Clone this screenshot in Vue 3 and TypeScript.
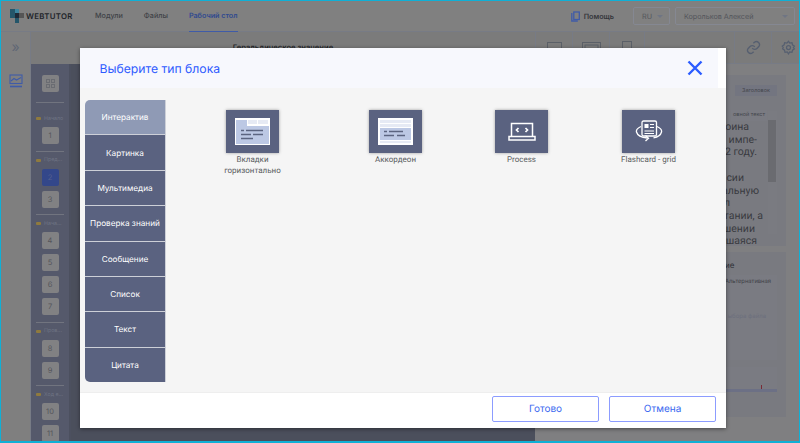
<script setup lang="ts">
interface Tile { name: string; kind: string }
const tabs: string[] = ['Интерактив', 'Картинка', 'Мультимедиа', 'Проверка знаний', 'Сообщение', 'Список', 'Текст', 'Цитата']
const tiles: Tile[] = [
  { name: 'Вкладки горизонтально', kind: 'tabs' },
  { name: 'Аккордеон', kind: 'acc' },
  { name: 'Process', kind: 'proc' },
  { name: 'Flashcard - grid', kind: 'flash' },
]
const groups = [
  { label: 'Начало', items: [1] },
  { label: 'Пред...', items: [2, 3] },
  { label: 'Нача...', items: [4, 5, 6, 7] },
  { label: 'Пров...', items: [8, 9] },
  { label: 'Ход е...', items: [10, 11] },
]
const lines = [
  { t: 'роина', pr: 14 },
  { t: '. импе-', pr: 6 },
  { t: '2 году.', pr: 6 },
  { t: '\u00a0', pr: 0 },
  { t: 'сии', pr: 19 },
  { t: 'альную', pr: 4 },
  { t: 'л', pr: 33 },
  { t: 'тании, а', pr: 0 },
  { t: 'шении', pr: 8 },
  { t: '-шаяся', pr: 6 },
]
</script>

<template>
  <div class="page">
    <header class="top">
      <div class="logo">
        <svg width="14" height="14" viewBox="0 0 14 14"><rect x="0" y="0" width="5" height="9" fill="#24566a"/><rect x="5" y="0" width="4" height="4" fill="#3c86a0"/><rect x="5" y="4" width="4" height="5" fill="#1d2a38"/><rect x="9" y="4" width="5" height="5" fill="#555"/><rect x="5" y="9" width="4" height="5" fill="#24566a"/></svg>
        <span>WEBTUTOR</span>
      </div>
      <nav class="nav">
        <span>Модули</span><span>Файлы</span><span class="active">Рабочий стол</span>
      </nav>
      <div class="top-right">
        <svg class="book" width="9" height="11" viewBox="0 0 9 11" fill="none" stroke="#3f5ba8" stroke-width="1.3"><rect x="2.800" y="1" width="5.500" height="7.500"/><path d="M.8 2v8h6"/></svg>
        <span class="help">Помощь</span>
        <div class="sel sel-lang">RU<i></i></div>
        <div class="sel sel-user">Корольков Алексей<i></i></div>
      </div>
    </header>
    <div class="main">
      <aside class="rail">
        <div class="chev">»</div>
        <svg width="14" height="14" viewBox="0 0 14 14" fill="none" stroke="#3f5ba8" stroke-width="1.1"><rect x="1" y="1" width="12" height="8.500"/><path d="M2 7l3-2.500 2.500 1.500L12 3.500"/><path d="M1 12.500h12" stroke-width="1.600"/></svg>
      </aside>
      <div class="work">
        <div class="toolbar">
          <div class="doc-title">Геральдическое значение</div>
          <div class="tools">
            <div class="tool w37"><svg width="15" height="12" viewBox="0 0 15 12" fill="none" stroke="#5b6068"><rect x=".5" y=".5" width="14" height="11"/></svg></div>
            <div class="tool w37"><svg width="19" height="12" viewBox="0 0 19 12" fill="none" stroke="#5b6068"><rect x=".5" y=".5" width="18" height="11"/><rect x="3" y="3" width="13" height="6"/></svg></div>
            <div class="tool w35"><svg width="10" height="13" viewBox="0 0 10 13" fill="none" stroke="#5b6068"><rect x=".5" y=".5" width="9" height="12"/></svg></div>
            <div class="tool grow"></div>
            <div class="tool w37"><svg width="15" height="15" viewBox="0 0 24 24" fill="none" stroke="#565f70" stroke-width="2.200"><path d="M10 13a5 5 0 0 0 7.500.5l3-3a5 5 0 0 0-7-7l-1.700 1.700"/><path d="M14 11a5 5 0 0 0-7.500-.5l-3 3a5 5 0 0 0 7 7l1.700-1.700"/></svg></div>
            <div class="tool w30"><svg width="15" height="15" viewBox="0 0 24 24" fill="none" stroke="#565f70" stroke-width="2"><circle cx="12" cy="12" r="3.200"/><path d="M12 2l2 3 3.600-.8.8 3.600 3 2-1.600 2.200 1.600 2.200-3 2-.8 3.600-3.600-.8-2 3-2-3-3.600.8-.8-3.600-3-2L3.600 12 2 9.800l3-2 .8-3.600 3.600.8z"/></svg></div>
          </div>
        </div>
        <div class="content">
          <div class="slides">
            <div class="grid-btn"><span class="mini"><u></u><u></u><u></u><u></u></span></div>
            <template v-for="(g, gi) in groups" :key="g.label">
              <div class="rule" :class="{ first: gi === 0 }"></div>
              <div class="folder"><b></b>{{ g.label }}</div>
              <div v-for="n in g.items" :key="n" class="thumb" :class="{ cur: n === 2 }">{{ n }}</div>
            </template>
          </div>
          <div class="stage"></div>
          <div class="props">
            <div class="card c1">
              <div class="hdr"><span>Заголовок</span></div>
              <div class="alt-tag">овной текст</div>
              <div class="txt">
                <div v-for="(l, i) in lines" :key="i" :style="{ paddingRight: l.pr + 'px' }">{{ l.t }}</div>
              </div>
              <div class="scroll"><em></em></div>
            </div>
            <div class="card c2">
              <div class="c2t">ие</div>
              <div class="box">
                <div class="alt">Альтернативная</div>
                <div class="file">ыбора файла</div>
              </div>
              <div class="box2"><s></s></div>
            </div>
          </div>
        </div>
      </div>
    </div>

    <section class="modal">
      <div class="m-head">
        <h2>Выберите тип блока</h2>
        <svg class="close" width="16" height="16" viewBox="0 0 16 16"><path d="M1.500 1.500l13 13M14.500 1.500l-13 13" stroke="#2b5cff" stroke-width="2.400" fill="none"/></svg>
      </div>
      <div class="m-body">
        <div class="tabs">
          <div v-for="(t, i) in tabs" :key="t" class="tab" :class="{ on: i === 0 }">{{ t }}</div>
        </div>
        <div class="tiles">
          <div v-for="t in tiles" :key="t.kind" class="tile" :class="t.kind">
            <div class="ico">
              <svg v-if="t.kind === 'tabs'" width="35" height="27" viewBox="0 0 35 27">
                <rect width="35" height="27" fill="#fff"/><rect x="1" y="2" width="11" height="8" fill="#bcc8e4"/><rect x="13" y="2" width="9" height="4" fill="#e6eaf4"/><rect x="23" y="2" width="10" height="4" fill="#e6eaf4"/><rect x="1" y="8" width="33" height="18" fill="#bcc8e4"/>
                <path d="M6 12.500h3M11 12.500h17M6 16.500h10M18 16.500h10M6 20.500h12" stroke="#5b6480" stroke-width="1.400"/>
              </svg>
              <svg v-else-if="t.kind === 'acc'" width="35" height="27" viewBox="0 0 35 27">
                <rect width="35" height="27" fill="#fff"/><rect x="2" y="2" width="31" height="3" fill="#e6eaf4"/><rect x="2" y="6" width="31" height="3" fill="#e6eaf4"/><rect x="2" y="10" width="31" height="12" fill="#bcc8e4"/><rect x="2" y="23" width="31" height="2" fill="#e6eaf4"/>
                <path d="M6 13.500h3M11 13.500h14M6 17.500h10M19 17.500h8" stroke="#5b6480" stroke-width="1.400"/>
              </svg>
              <svg v-else-if="t.kind === 'proc'" width="28" height="20" viewBox="0 0 28 20" fill="none" stroke="#fff" stroke-width="1.500">
                <path d="M3.500 14V1.500h21V14"/><rect x="1" y="14.500" width="26" height="3.500"/>
                <path d="M10.500 6l-2 2 2 2M17.500 6l2 2-2 2" stroke-width="1.700"/>
              </svg>
              <svg v-else width="28" height="24" viewBox="0 0 28 24" fill="none" stroke="#fff" stroke-width="1.300">
                <rect x="7" y="1" width="14.500" height="15" rx="1.500"/><rect x="9.500" y="4" width="4" height="4" fill="#fff" stroke="none"/><path d="M15 4.500h4M15 7.500h4M9.500 11h9.500M9.500 13.500h9.500" stroke-width="1"/>
                <path d="M6 6.500C2.500 8 1 10 1.500 12c.8 3 5 5.500 11 6"/><path d="M22 6.500c3.500 1.500 5 3.500 4.500 5.500-.6 2.500-3.500 5-8 5.800"/><path d="M10.500 15.500l3 2.700-3 2.800"/>
              </svg>
            </div>
            <div class="lbl">{{ t.name }}</div>
          </div>
        </div>
      </div>
      <div class="m-foot">
        <button type="button">Готово</button>
        <button type="button">Отмена</button>
      </div>
    </section>
  </div>
</template>

<style>
html, body { margin: 0; padding: 0; background: #7f7f7f; }
</style>

<style scoped>
* { box-sizing: border-box; }
.page {
  position: relative; width: 800px; height: 443px; overflow: hidden;
  display: flex; flex-direction: column; background: #7f7f7f;
  border: solid #0fb0d6; border-width: 1px 1px 2px 1px;
  font-family: Inter, "Noto Sans", sans-serif; color: #2f3137;
  text-rendering: geometricPrecision;
}
.top { height: 31px; flex: none; display: flex; align-items: center; background: #808080; border-bottom: 1px solid #777b85; position: relative; }
.logo { display: flex; align-items: center; margin-left: 9px; width: 85px; gap: 2px; }
.logo span { font: 600 7.800px Inter, sans-serif; letter-spacing: .3px; color: #20242a; }
.nav { display: flex; height: 31px; align-items: center; font-size: 7.200px; font-weight: 500; color: #3f4247; }
.nav span { margin-right: 21px; line-height: 31px; height: 32px; }
.nav .active { color: #304a8f; font-weight: 600; border-bottom: 1px solid #3f5ba8; }
.top-right { margin-left: auto; display: flex; align-items: center; }
.book { margin-right: 4px; }
.help { font-size: 7.200px; font-weight: 600; color: #35373c; margin-right: 19px; }
.sel { height: 18px; border: 1px solid #858892; border-radius: 2px; font-size: 7.200px; color: #54565c; display: flex; align-items: center; padding-left: 8px; position: relative; }
.sel i { position: absolute; right: 6px; top: 7px; border: 3px solid transparent; border-top: 3px solid #6f7583; border-bottom-width: 0; }
.sel-lang { width: 37px; margin-right: 5px; }
.sel-user { width: 120px; margin-right: 4px; }
.main { flex: 1; display: flex; min-height: 0; }
.rail { width: 30px; background: #7f7f7f; border-right: 1px solid #777b85; display: flex; flex-direction: column; align-items: center; }
.chev { color: #5f6775; font-size: 14px; line-height: 14px; margin-top: 9px; height: 33px; }
.work { flex: 1; display: flex; flex-direction: column; min-width: 0; }
.toolbar { height: 32px; flex: none; display: flex; background: #7b7b7b; }
.doc-title { width: 504px; text-align: center; padding: 11px 0 0 0; font-size: 7.600px; font-weight: 600; color: #26282c; }
.tools { flex: 1; display: flex; border-bottom: 1px solid #777b85; }
.tool { border-left: 1px solid #777b85; display: flex; align-items: center; justify-content: center; }
.w37 { width: 37px; } .w35 { width: 35px; } .w30 { flex: 1; padding-left: 5px; } .grow { width: 90px; }
.content { flex: 1; display: flex; min-height: 0; }
.slides { width: 40px; background: #55596b; border-right: 2px solid #4c505f; display: flex; flex-direction: column; align-items: center; overflow: hidden; padding-top: 11px; }
.grid-btn { width: 17px; height: 17px; background: #818183; border-radius: 2px; display: flex; align-items: center; justify-content: center; flex: none; margin-bottom: 8px; }
.mini { width: 9px; height: 9px; display: grid; grid-template-columns: 4px 4px; gap: 1px; }
.mini u { border: 1px solid #6a6c72; display: block; }
.rule { width: 28px; height: 1px; background: #71747f; flex: none; margin-bottom: 3px; margin-top: 1.500px; }
.rule.first { margin-bottom: 10px; margin-top: 2px; }
.folder { width: 28px; height: 9px; font-size: 5.300px; color: #6f7484; white-space: nowrap; display: flex; align-items: center; gap: 3px; flex: none; margin-top: 1px; margin-bottom: 4px; }
.folder b { width: 5px; height: 3px; background: #8f7a3e; border-radius: 1px; flex: none; }
.thumb { width: 17px; height: 17px; background: #818183; border-radius: 2px; flex: none; margin-bottom: 5px; font-size: 7.500px; color: #55565b; display: flex; align-items: center; justify-content: center; }
.thumb.cur { background: #33478a; color: #55608e; }
.stage { width: 464px; background: #4b4f5c; }
.props { flex: 1; background: #7f7f81; padding: 11px 13px 0 0; display: flex; flex-direction: column; position: relative; min-width: 0; }
.card { background: #797a80; margin-left: 184px; }
.c1 { height: 171px; position: relative; overflow: hidden; }
.hdr { height: 20px; display: flex; justify-content: flex-end; padding: 10px 9px 0 0; }
.hdr span { font-size: 5.500px; background: #737580; color: #44464c; padding: 3px 7px; height: 11px; line-height: 6px; }
.alt-tag { position: absolute; right: 19px; top: 35px; height: 11px; line-height: 11px; padding: 0 2px; background: #7a7b82; font-size: 5.500px; color: #44464c; }
.txt { position: absolute; left: 0; right: 23px; top: 46px; font-size: 10.500px; line-height: 12.700px; text-align: right; color: #3a3b41; white-space: nowrap; font-family: Roboto, sans-serif; }
.scroll { position: absolute; right: 9px; top: 36px; width: 9px; height: 123px; background: #7a7b81; padding-top: 9px; }
.scroll em { display: block; width: 8px; height: 62px; background: #6a6b70; }
.c2 { height: 165px; margin-top: 6px; position: relative; padding: 0; }
.c2t { position: absolute; left: 6px; top: 8px; font-size: 8px; color: #2f3137; }
.box { position: absolute; left: 0; right: 9px; top: 23px; height: 85px; background: #7a7b82; }
.alt { position: absolute; right: 6px; top: 3px; font-size: 5.800px; color: #3e4046; }
.file { position: absolute; right: 11px; top: 38px; font-size: 6px; color: #6c6f7d; }
.box2 { position: absolute; left: 0; right: 9px; top: 115px; height: 25px; background: #7a7b82; border-bottom: 3px solid #6c7085; }
.box2 s { position: absolute; right: 15px; bottom: 0; width: 1px; height: 4px; background: #7a2a35; }

.modal { position: absolute; left: 79px; top: 47px; width: 646px; height: 380px; background: #fff; box-shadow: 0 1px 4px rgba(0,0,0,.45); display: flex; flex-direction: column; }
.m-head { height: 40px; width: 638px; background: #f7f8fd; display: flex; align-items: center; justify-content: space-between; padding: 0 16px 0 19.500px; flex: none; }
.m-head h2 { margin: 0; font-size: 12.200px; font-weight: 400; color: #2e5bff; }
.close { display: block; margin-right: -1px; }
.m-body { height: 305px; flex: none; background: #f5f5f5; border-bottom: 1px solid #eee; padding: 12px 0 0 5px; display: flex; }
.tabs { width: 81px; height: 282px; display: flex; flex-direction: column; flex: none; }
.tab { flex: 1; background: #5a6280; color: #fff; font-size: 8.200px; font-weight: 400; display: flex; align-items: center; justify-content: center; border-bottom: 1px solid #cdd0d8; border-right: 1px solid #cdd0d8; white-space: nowrap; }
.tab:first-child { border-top-left-radius: 5px; }
.tab:last-child { border-bottom-left-radius: 5px; border-bottom: none; }
.tab.on { background: #8f9ab5; }
.tiles { flex: 1; display: grid; grid-template-columns: 143px 126px 127px 80px; padding: 10px 0 0 60px; align-content: start; }
.tile { width: 53px; display: flex; flex-direction: column; align-items: center; }
.ico { width: 53px; height: 43px; background: #5a6280; box-shadow: 0 0 3px rgba(0,0,0,.35); display: flex; align-items: center; justify-content: center; flex: none; }
.lbl { width: 80px; margin-top: 2px; text-align: center; font-size: 8px; line-height: 10.500px; font-family: Roboto, sans-serif; color: #5b5d62; }
.m-foot { flex: 1; display: flex; gap: 10px; justify-content: flex-end; align-items: flex-start; padding: 3px 10px 0 0; }
.m-foot button { width: 107px; height: 26px; background: #fff; border: 1px solid #8c9cff; border-radius: 2px; color: #3a68f0; font-family: Inter, sans-serif; font-size: 10px; padding: 0; text-rendering: geometricPrecision; }
</style>
